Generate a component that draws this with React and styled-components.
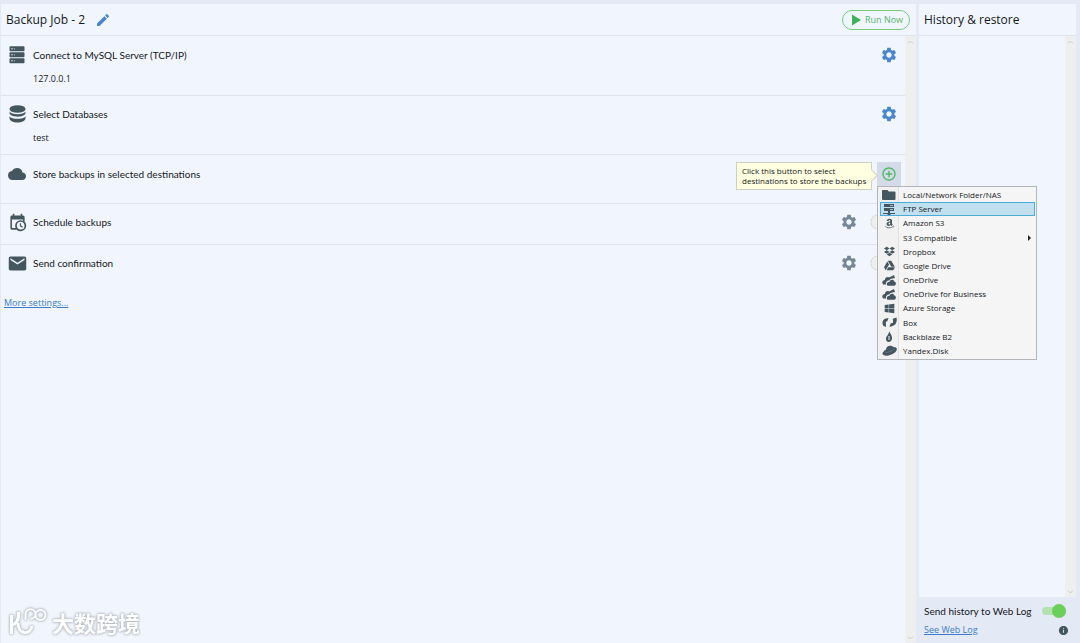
import React from 'react';
import styled, { createGlobalStyle, css } from 'styled-components';
import { MdSettings, MdCloud, MdEmail, MdEdit, MdControlPoint, MdInfo } from 'react-icons/md';
import { FaAmazon, FaDropbox, FaGoogleDrive, FaWindows } from 'react-icons/fa';

const GlobalStyle = createGlobalStyle`
  * { box-sizing: border-box; }
  body {
    margin: 0;
    background: #e4e9f6;
    color: #14171b;
    font-family: 'Open Sans', 'Noto Sans', sans-serif;
    font-size: 10px;
  }
  h1, h2, h3, p, ul { margin: 0; padding: 0; font-weight: 400; }
  button { font: inherit; color: inherit; border: 0; padding: 0; background: none; }
  svg { display: block; flex: none; }
`;

const Page = styled.div`
  display: grid;
  grid-template-columns: minmax(0, 1fr) 157px;
  column-gap: 3px;
  min-height: 100vh;
  padding: 4px 4px 0 1px;
`;

const Panel = styled.main`
  display: flex;
  flex-direction: column;
  background: #f1f6fe;
`;

const SidePanel = styled.aside`
  display: flex;
  flex-direction: column;
`;

const Header = styled.header`
  display: flex;
  align-items: center;
  gap: 6px;
  height: 32px;
  padding: 0 6px 0 5px;
  background: #f1f6fe;
  border-bottom: 1px solid #dde2ec;
`;

const Title = styled.h1`
  font-size: 12px;
  line-height: 16px;
  white-space: nowrap;
`;

const RunButton = styled.button`
  display: flex;
  align-items: center;
  gap: 4px;
  height: 20px;
  width: 68px;
  margin-left: auto;
  padding: 0 0 0 9px;
  border: 1px solid #7ac98b;
  border-radius: 10px;
  color: #55b56a;
  font-size: 9px;
  white-space: nowrap;
`;

const Body = styled.div`
  display: flex;
  flex: 1;
  background: #f1f6fe;
`;

const Content = styled.div`
  flex: 1;
  min-width: 0;
  padding-top: 1px;
`;

const ScrollTrack = styled.div`
  display: flex;
  flex-direction: column;
  justify-content: space-between;
  align-items: center;
  width: 11px;
  padding: 4px 0 3px;
  background: #efeff0;
`;

const Step = styled.section`
  display: flex;
  align-items: flex-start;
  height: ${(p) => p.$height}px;
  padding: ${(p) => p.$inset}px 4px 0 6px;
  border-bottom: ${(p) => (p.$last ? 0 : '1px solid #dde2ec')};
`;

const StepIcon = styled.span`
  display: flex;
  align-items: center;
  justify-content: center;
  width: 20px;
  height: 24px;
  margin-right: 6px;
  color: #44565f;
`;

const StepText = styled.div`
  flex: 1;
`;

const StepTitle = styled.h2`
  font-family: Lato, 'Open Sans', sans-serif;
  font-size: 10px;
  line-height: 24px;
`;

const StepValue = styled.p`
  font-size: 9px;
  line-height: 24px;
`;

const IconButton = styled.button`
  display: flex;
  align-items: center;
  justify-content: center;
  width: 24px;
  height: 24px;
  color: ${(p) => p.$color || '#4a86cf'};
  background: ${(p) => (p.$pressed ? '#d3dbe9' : 'none')};
`;

const Anchor = styled.div`
  position: relative;
`;

const Tooltip = styled.div`
  position: absolute;
  top: 0;
  right: 29px;
  width: 136px;
  padding: 3px 0 3px 5px;
  border: 1px solid #cfcfc4;
  background: #ffffe1;
  font-size: 8px;
  line-height: 10px;
  white-space: nowrap;

  &::after {
    content: '';
    position: absolute;
    top: 8px;
    right: -5px;
    width: 8px;
    height: 8px;
    border: 1px solid #cfcfc4;
    border-left: 0;
    border-bottom: 0;
    background: #ffffe1;
    transform: rotate(45deg);
  }
`;

const Menu = styled.ul`
  position: absolute;
  z-index: 2;
  top: 24px;
  left: 0;
  display: grid;
  grid-template-rows: repeat(12, 1fr);
  width: 160px;
  height: 174px;
  padding: 1px 1px 1px 2px;
  border: 1px solid #b2b5b9;
  background: linear-gradient(90deg, #f1f1f1 20px, #dfe0e2 20px, #dfe0e2 21px, #f5f5f5 21px);
  list-style: none;
`;

const MenuItem = styled.button`
  display: flex;
  align-items: center;
  width: 100%;
  height: 100%;
  padding: 0 4px 0 1px;
  font-size: 8px;
  line-height: 10px;
  text-align: left;
  white-space: nowrap;
  outline: 1px solid transparent;
  outline-offset: -1px;
  ${(p) =>
    p.$active &&
    css`
      background: #c1e0ef;
      outline-color: #4dabd8;
    `}
`;

const MenuIcon = styled.span`
  display: flex;
  justify-content: center;
  width: 16px;
  margin-right: 6px;
  color: #44565f;
`;

const SubmenuArrow = styled.span`
  margin-left: auto;
  border: 3px solid transparent;
  border-right: 0;
  border-left-color: #222;
`;

const Switch = styled.input`
  appearance: none;
  display: flex;
  align-items: center;
  width: 24px;
  height: 8px;
  margin: 0 3px 0 0;
  border-radius: 4px;
  background: ${(p) => (p.checked ? '#b3e2b1' : '#d2d5db')};

  &::before {
    content: '';
    width: 14px;
    height: 14px;
    margin-left: ${(p) => (p.checked ? '10px' : 0)};
    flex: none;
    border-radius: 50%;
    background: ${(p) => (p.checked ? '#6bcf5c' : '#eceef0')};
    box-shadow: ${(p) => (p.checked ? 'none' : '0 0 1px #999')};
  }
`;

const StepSwitch = styled(Switch)`
  margin: 8px 6px 0 10px;
`;

const Link = styled.a`
  color: #3a7cc8;
  font-size: 9px;
  line-height: 12px;
  text-decoration: underline;
`;

const MoreSettings = styled.div`
  padding: 8px 3px;
`;

const SideFooter = styled.footer`
  display: grid;
  gap: 3px;
  align-content: start;
  height: 46px;
  padding: 6px 7px 0 5px;
`;

const FooterRow = styled.div`
  display: flex;
  align-items: center;
  justify-content: space-between;
  height: 16px;
  font-family: Lato, 'Open Sans', sans-serif;
  font-size: 10px;
  white-space: nowrap;
`;

const FooterLink = styled(Link)`
  font-family: 'Open Sans', sans-serif;
`;

const Watermark = styled.div`
  position: fixed;
  left: 9px;
  bottom: 6px;
  display: flex;
  align-items: center;
  gap: 4px;
  color: #fff;
  font-family: 'Noto Sans CJK SC', sans-serif;
  font-size: 22px;
  font-weight: 700;
  line-height: 30px;
  filter: drop-shadow(0 0 1px #b4b9c1) drop-shadow(0 0 1px #b4b9c1);
`;

const ServerIcon = () => (
  <svg width="16" height="18" viewBox="0 0 16 18" fill="currentColor">
    {[0, 6, 12].map((y) => (
      <g key={y}>
        <rect x="0.500" y={y + 0.3} width="15" height="5" rx="0.8" />
        <circle cx="3" cy={y + 2.8} r="0.7" fill="#f1f6fe" />
        <circle cx="5.400" cy={y + 2.8} r="0.6" fill="#c3ccd4" />
      </g>
    ))}
  </svg>
);

const DatabaseIcon = () => (
  <svg width="17" height="18" viewBox="0 0 17 18" fill="currentColor">
    <ellipse cx="8.5" cy="4" rx="8" ry="3.800" />
    <path d="M.5 6.500C2.500 10 14.500 10 16.500 6.500V8.300C15.500 12.800 1.500 12.800 .5 8.300z" />
    <path d="M.5 11.200C2.500 14.700 14.500 14.700 16.500 11.200V13.500C15.500 18.800 1.500 18.800 .5 13.500z" />
  </svg>
);

const CalendarClockIcon = () => (
  <svg width="19" height="19" viewBox="0 0 24 24" fill="currentColor">
    <path d="M15 13h1.500v2.820l2.440 1.410-.75 1.300L15 16.690V13m4-5H5v11h4.670c-.43-.91-.67-1.930-.67-3a7 7 0 0 1 7-7c1.070 0 2.090.24 3 .67V8M5 21a2 2 0 0 1-2-2V5c0-1.110.89-2 2-2h1V1h2v2h8V1h2v2h1a2 2 0 0 1 2 2v6.100c1.240 1.260 2 2.990 2 4.900a7 7 0 0 1-7 7c-1.910 0-3.640-.76-4.900-2H5m11-9.850A4.850 4.850 0 0 0 11.150 16c0 2.680 2.170 4.850 4.850 4.850A4.850 4.850 0 0 0 20.850 16c0-2.680-2.170-4.850-4.850-4.850z" />
    <path d="M4 4h16v4H4z" />
  </svg>
);

const FolderIcon = () => (
  <svg width="14" height="10" viewBox="0 0 14 10" fill="currentColor">
    <path d="M1 0h4.500l1.200 1.500H12.500a1 1 0 0 1 1 1V9a1 1 0 0 1-1 1H1a1 1 0 0 1-1-1V1a1 1 0 0 1 1-1z" />
  </svg>
);

const FtpIcon = () => (
  <svg width="12" height="11" viewBox="0 0 12 11" fill="currentColor">
    <path d="M1 0h10v3H1zM1 4h10v3H1zM5 7h2v2h5v1H7.500v1h-3v-1H0V9h5z" />
    <path d="M7 1h3v.8H7zM7 5h3v.8H7z" fill="#c1e0ef" />
  </svg>
);

const OneDriveIcon = () => (
  <svg width="14" height="11" viewBox="0 0 14 11" fill="currentColor">
    <path d="M1.200 9.500C-.8 7.500 .8 5 2.800 5 3 2.500 5.500 1.500 7 2.500L12 0 13 3.300C10.500 2.800 8 3.800 7.200 5.500 5 5.300 3.500 7.200 4 9.500z" />
    <path d="M5.500 10.800C4 9.500 5 6.800 7.500 6.800 8 4.200 11.800 4 12.300 6.500c2 .5 2.200 3.300 .2 4.300z" />
  </svg>
);

const BoxIcon = () => (
  <svg width="15" height="11" viewBox="0 0 15 11" fill="currentColor">
    <path d="M6.500 1 5.300 4.200 3.800 4.800 4 10 1.200 8.800C-.4 5 1 2 4 1.500z" />
    <path d="M7.500 10 8.500 6.500 11 5.800 11 2.200 10 2 14.500 .5C15.500 5 13.500 8.500 10.500 9z" />
  </svg>
);

const BackblazeIcon = () => (
  <svg width="8" height="11" viewBox="0 0 8 11" fill="currentColor">
    <path d="M4.200 0C4.500 2 7.300 4 7 7.500 6.800 9.500 5.500 11 3.800 11 2 11 .8 9.500 1 7.500 1.200 5 4 3.500 4.200 0z" />
    <path d="M4 5v4" stroke="#f1f1f1" strokeWidth="1" />
  </svg>
);

const YandexDiskIcon = () => (
  <svg width="15" height="11" viewBox="0 0 15 11" fill="currentColor">
    <path d="M4 4.500C4 .5 9-.5 11.500 2c3 0 4 1.500 3 3.500C13 9 6 10.800 4.500 10.800 1 10.800 -.5 9 1 7.200 2 6 3 5 4 4.500z" />
    <path d="M3.500 7.300C7 7.500 10 6 12 4" stroke="#88949b" strokeWidth=".5" fill="none" />
  </svg>
);

const PlayIcon = () => (
  <svg width="9" height="12" viewBox="0 0 9 12" fill="#3fb158">
    <path d="M0 .5 9 6 0 11.500z" />
  </svg>
);

const Chevron = ({ down }) => (
  <svg width="7" height="4" viewBox="0 0 7 4" fill="none" stroke="#c3c5c9">
    <path d={down ? 'M1 .5 3.500 3 6 .5' : 'M1 3.500 3.500 1 6 3.500'} />
  </svg>
);

const LogoMark = () => (
  <svg width="39" height="30" viewBox="0 0 39 30" fill="none" stroke="#fff" strokeWidth="3">
    <path d="M2.500 8v19M2.500 18C8 17 10 13 9.500 5M9 16C9 28 21 28.500 23 19" />
    <path d="M16.500 13V7a5 4.800 0 1 1 5 4.800M26.500 8a5 5 0 1 0 10 0a5 5 0 1 0-10 0" strokeWidth="2" />
  </svg>
);

const destinations = [
  { name: 'Local/Network Folder/NAS', icon: <FolderIcon /> },
  { name: 'FTP Server', icon: <FtpIcon />, active: true },
  { name: 'Amazon S3', icon: <FaAmazon size={11} /> },
  { name: 'S3 Compatible', submenu: true },
  { name: 'Dropbox', icon: <FaDropbox size={11} /> },
  { name: 'Google Drive', icon: <FaGoogleDrive size={11} /> },
  { name: 'OneDrive', icon: <OneDriveIcon /> },
  { name: 'OneDrive for Business', icon: <OneDriveIcon /> },
  { name: 'Azure Storage', icon: <FaWindows size={11} /> },
  { name: 'Box', icon: <BoxIcon /> },
  { name: 'Backblaze B2', icon: <BackblazeIcon /> },
  { name: 'Yandex.Disk', icon: <YandexDiskIcon /> },
];

function JobStep({ icon, title, value, height, inset = 6, last, children }) {
  return (
    <Step $height={height} $inset={inset} $last={last}>
      <StepIcon>{icon}</StepIcon>
      <StepText>
        <StepTitle>{title}</StepTitle>
        {value && <StepValue>{value}</StepValue>}
      </StepText>
      {children}
    </Step>
  );
}

function Gear({ label, color }) {
  return (
    <IconButton aria-label={label} $color={color}>
      <MdSettings size={18} />
    </IconButton>
  );
}

function DestinationPicker() {
  return (
    <Anchor>
      <IconButton aria-label="Add destination" $color="#4fb765" $pressed>
        <MdControlPoint size={16} />
      </IconButton>
      <Tooltip role="tooltip">
        Click this button to select
        <br />
        destinations to store the backups
      </Tooltip>
      <Menu>
        {destinations.map((d) => (
          <li key={d.name}>
            <MenuItem $active={d.active}>
              <MenuIcon>{d.icon}</MenuIcon>
              {d.name}
              {d.submenu && <SubmenuArrow />}
            </MenuItem>
          </li>
        ))}
      </Menu>
    </Anchor>
  );
}

function App() {
  return (
    <>
      <GlobalStyle />
      <Page>
        <Panel>
          <Header>
            <Title>Backup Job - 2</Title>
            <IconButton aria-label="Rename job">
              <MdEdit size={16} />
            </IconButton>
            <RunButton>
              <PlayIcon />
              Run Now
            </RunButton>
          </Header>
          <Body>
            <Content>
              <JobStep icon={<ServerIcon />} title="Connect to MySQL Server (TCP/IP)" value="127.0.0.1" height={59}>
                <Gear label="Connection settings" />
              </JobStep>
              <JobStep icon={<DatabaseIcon />} title="Select Databases" value="test" height={59}>
                <Gear label="Database settings" />
              </JobStep>
              <JobStep icon={<MdCloud size={18} />} title="Store backups in selected destinations" height={49} inset={7}>
                <DestinationPicker />
              </JobStep>
              <JobStep icon={<CalendarClockIcon />} title="Schedule backups" height={41}>
                <Gear label="Schedule settings" color="#768797" />
                <StepSwitch type="checkbox" aria-label="Schedule backups" checked={false} readOnly />
              </JobStep>
              <JobStep icon={<MdEmail size={21} />} title="Send confirmation" height={42} last>
                <Gear label="Confirmation settings" color="#768797" />
                <StepSwitch type="checkbox" aria-label="Send confirmation" checked={false} readOnly />
              </JobStep>
              <MoreSettings>
                <Link href="#more">More settings...</Link>
              </MoreSettings>
            </Content>
            <ScrollTrack>
              <Chevron />
              <Chevron down />
            </ScrollTrack>
          </Body>
        </Panel>
        <SidePanel>
          <Header>
            <Title as="h2">History &amp; restore</Title>
          </Header>
          <Body>
            <Content />
            <ScrollTrack>
              <Chevron />
              <Chevron down />
            </ScrollTrack>
          </Body>
          <SideFooter>
            <FooterRow as="label">
              Send history to Web Log
              <Switch type="checkbox" checked readOnly />
            </FooterRow>
            <FooterRow>
              <FooterLink href="#weblog">See Web Log</FooterLink>
              <MdInfo size={11} color="#44565f" />
            </FooterRow>
          </SideFooter>
        </SidePanel>
      </Page>
      <Watermark>
        <LogoMark />
        大数跨境
      </Watermark>
    </>
  );
}

export default App;
